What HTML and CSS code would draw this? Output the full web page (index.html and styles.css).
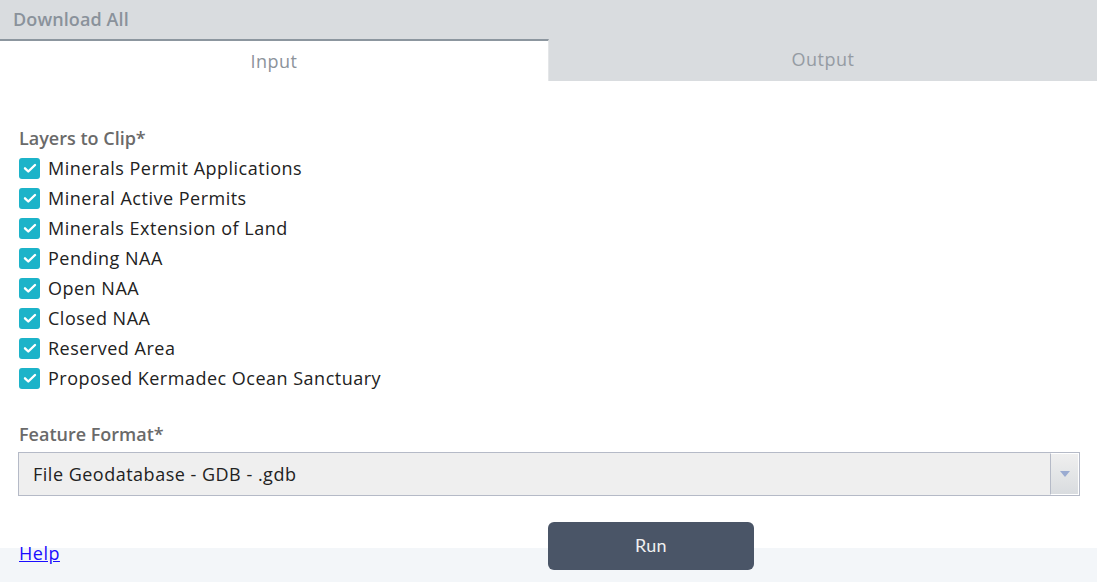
FILE: index.html
```html
<!DOCTYPE html>
<html>
<head>
<meta charset="utf-8">
<link rel="stylesheet" href="styles.css">
</head>
<body>
<div class="app">
  <div class="header">Download All</div>
  <div class="tabs">
    <div class="tab active">Input</div>
    <div class="tab">Output</div>
  </div>
  <div class="content">
    <div class="label">Layers to Clip*</div>
    <ul class="layers">
      <li><span class="cb"><svg viewBox="0 0 20 20" width="20" height="20"><path d="M5 10.3l3.3 3.2L15 7" fill="none" stroke="#fff" stroke-width="2.4" stroke-linecap="round" stroke-linejoin="round"/></svg></span>Minerals Permit Applications</li>
      <li><span class="cb"><svg viewBox="0 0 20 20" width="20" height="20"><path d="M5 10.3l3.3 3.2L15 7" fill="none" stroke="#fff" stroke-width="2.4" stroke-linecap="round" stroke-linejoin="round"/></svg></span>Mineral Active Permits</li>
      <li><span class="cb"><svg viewBox="0 0 20 20" width="20" height="20"><path d="M5 10.3l3.3 3.2L15 7" fill="none" stroke="#fff" stroke-width="2.4" stroke-linecap="round" stroke-linejoin="round"/></svg></span>Minerals Extension of Land</li>
      <li><span class="cb"><svg viewBox="0 0 20 20" width="20" height="20"><path d="M5 10.3l3.3 3.2L15 7" fill="none" stroke="#fff" stroke-width="2.4" stroke-linecap="round" stroke-linejoin="round"/></svg></span>Pending NAA</li>
      <li><span class="cb"><svg viewBox="0 0 20 20" width="20" height="20"><path d="M5 10.3l3.3 3.2L15 7" fill="none" stroke="#fff" stroke-width="2.4" stroke-linecap="round" stroke-linejoin="round"/></svg></span>Open NAA</li>
      <li><span class="cb"><svg viewBox="0 0 20 20" width="20" height="20"><path d="M5 10.3l3.3 3.2L15 7" fill="none" stroke="#fff" stroke-width="2.4" stroke-linecap="round" stroke-linejoin="round"/></svg></span>Closed NAA</li>
      <li><span class="cb"><svg viewBox="0 0 20 20" width="20" height="20"><path d="M5 10.3l3.3 3.2L15 7" fill="none" stroke="#fff" stroke-width="2.4" stroke-linecap="round" stroke-linejoin="round"/></svg></span>Reserved Area</li>
      <li><span class="cb"><svg viewBox="0 0 20 20" width="20" height="20"><path d="M5 10.3l3.3 3.2L15 7" fill="none" stroke="#fff" stroke-width="2.4" stroke-linecap="round" stroke-linejoin="round"/></svg></span>Proposed Kermadec Ocean Sanctuary</li>
    </ul>
    <div class="label label2">Feature Format*</div>
    <div class="select">
      <div class="select-text">File Geodatabase - GDB - .gdb</div>
      <div class="select-btn"><span class="arrow"></span></div>
    </div>
  </div>
  <div class="footer">
    <a href="#" class="help">Help</a>
    <button class="run">Run</button>
  </div>
</div>
</body>
</html>
```
FILE: styles.css
```css
* { box-sizing: border-box; }
html, body { margin: 0; padding: 0; }
body {
  width: 1097px;
  height: 582px;
  overflow: hidden;
  background: #fff;
  font-family: "Open Sans", Lato, sans-serif;
  letter-spacing: 0.5px;
}
.app { display: flex; flex-direction: column; height: 582px; }
.header {
  height: 39px;
  background: #d9dcdf;
  color: #8a929b;
  font-size: 18px;
  font-weight: 600;
  letter-spacing: 0.1px;
  padding: 7px 0 0 13px;
}
.tabs {
  display: flex;
  height: 42px;
  background: #d9dcdf;
}
.tab {
  flex: 1;
  text-align: center;
  font-size: 18px;
  color: #959ba3;
  padding-top: 8px;
  font-weight: 400;
}
.tab.active {
  background: #fff;
  color: #8c939b;
  border-top: 2px solid #8c969f;
  border-right: 1px solid #e4e6e8;
  padding-top: 8px;
}
.content {
  flex: 1;
  padding: 45px 17px 0 18px;
}
.label {
  font-size: 18px;
  color: #6a6a6a;
  font-weight: 600;
  letter-spacing: 0;
  line-height: 24px;
  padding-left: 1px;
}
.label2 { margin-top: 29px; }
.layers {
  list-style: none;
  margin: 3px 0 0 0;
  padding: 0 0 0 1px;
}
.layers li {
  display: flex;
  align-items: center;
  height: 30px;
  font-size: 18px;
  color: #222;
}
.cb {
  width: 21px;
  height: 21px;
  border-radius: 3px;
  background: #1cb3c9;
  display: flex;
  align-items: center;
  justify-content: center;
  margin-right: 8px;
}
.cb svg { display: block; }
.select {
  display: flex;
  margin-top: 6px;
  height: 44px;
  border: 1px solid #b5bac7;
  background: #efefef;
}
.select-text {
  flex: 1;
  font-size: 18px;
  color: #222;
  padding: 9px 0 0 14px;
}
.select-btn {
  width: 29px;
  border-left: 1px solid #b5bac7;
  border-top: 1px solid #fff;
  border-right: 1px solid #fff;
  border-bottom: 1px solid #fff;
  background: linear-gradient(#efefef, #d9dcdf);
  display: flex;
  align-items: center;
  justify-content: center;
}
.arrow {
  width: 0; height: 0;
  border-left: 5px solid transparent;
  border-right: 5px solid transparent;
  border-top: 6px solid #9aabd1;
}
.footer {
  height: 34px;
  background: #f3f6f9;
  position: relative;
  padding: 0 0 0 19px;
}
.help {
  color: #1a0dff;
  font-size: 18px;
  line-height: 10px;
  position: relative;
  top: -5px;
}
.run {
  position: absolute;
  left: 548px;
  top: -26px;
  width: 206px;
  height: 48px;
  border: none;
  border-radius: 6px;
  background: #4a5567;
  color: #f0f0f0;
  font-family: Lato, sans-serif;
  font-size: 18px;
  letter-spacing: 0.3px;
  padding-bottom: 4px;
}
```
